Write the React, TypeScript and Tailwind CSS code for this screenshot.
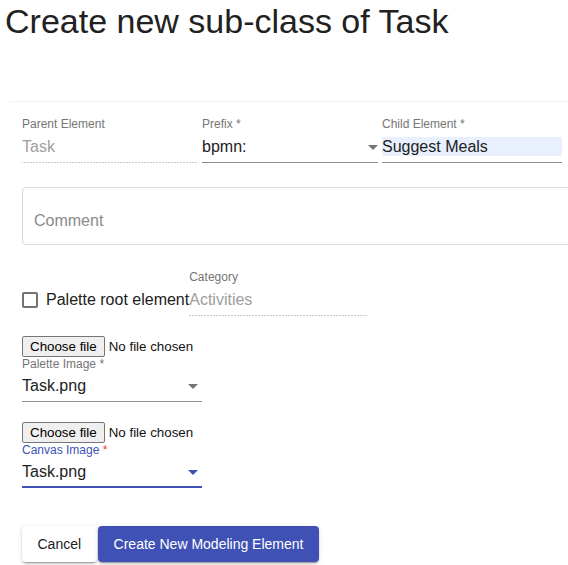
import React from "react";

const font = "font-['Liberation_Sans',Arial,sans-serif]";

function Arrow({ color = "#757575" }: { color?: string }) {
  return (
    <svg width="10" height="5" viewBox="0 0 10 5" className="block">
      <path d="M0 0l5 5 5-5z" fill={color} />
    </svg>
  );
}

function Field({
  label,
  value,
  width,
  disabled,
  select,
  highlight,
  arrowRight = 4,
  low,
}: {
  label: string;
  value: string;
  width: number;
  disabled?: boolean;
  select?: boolean;
  highlight?: boolean;
  arrowRight?: number;
  low?: boolean;
}) {
  return (
    <div className="flex flex-col shrink-0" style={{ width }}>
      <div
        className={
          "h-[16px] text-[12px] leading-[12px] text-[#757575] whitespace-nowrap " + (low ? "pt-[4px]" : "pt-[3px]")
        }
      >
        {label}
      </div>
      <div
        className={
          "relative flex h-[32px] pt-[6px] pb-[7px] text-[16px] leading-[19px] " +
          (disabled
            ? "text-[#9e9e9e] bg-[linear-gradient(to_right,rgba(0,0,0,0.42)_33%,transparent_0%)] bg-[length:3px_1px] bg-repeat-x bg-bottom"
            : "text-[#212121] border-b border-[#8f8f8f]")
        }
      >
        <span className={"h-[19px] block w-full " + (highlight ? "bg-[#e8f0fe]" : "")}>{value}</span>
        {select && (
          <span className="absolute top-[14px]" style={{ right: arrowRight }}>
            <Arrow />
          </span>
        )}
      </div>
    </div>
  );
}

function FileRow() {
  return (
    <div className="flex h-[18px] items-start text-[13.33px] leading-[15px] text-[#111]">
      <div className="h-[21px] px-[7px] flex items-center border border-[#767676] rounded-[2px] bg-[#efefef] text-black">
        Choose file
      </div>
      <div className="ml-[4px] h-[21px] flex items-center">No file chosen</div>
    </div>
  );
}

export default function App() {
  return (
    <div className={"w-[568px] h-[565px] overflow-hidden bg-white " + font}>
      <h1 className="pl-[5px] text-[34px] leading-[42px] text-[#212121] font-normal whitespace-nowrap">
        Create new sub-class of Task
      </h1>
      <div className="mt-[59px] ml-[7px] w-[600px] rounded-tl-[4px] border-t border-[#f2f2f2] pl-[15px] pt-[13px]">
        <div className="flex gap-[4px]">
          <Field label="Parent Element" value="Task" width={176} disabled />
          <Field label="Prefix *" value="bpmn:" width={176} select arrowRight={0} />
          <Field label="Child Element *" value="Suggest Meals" width={180} highlight />
        </div>

        <div className="mt-[24px] w-[560px] h-[58px] border border-[#dadada] rounded-[4px] pl-[11px] pt-[23px] text-[16px] leading-[19px] text-[#8a8a8a]">
          Comment
        </div>

        <div className="mt-[23px] flex items-start">
          <label className="mt-[20px] h-[24px] flex items-center text-[16px] text-[#212121] whitespace-nowrap">
            <span className="w-[16px] h-[16px] border-2 border-[#737373] rounded-[2px] mr-[8px]" />
            Palette root element
          </label>
          <Field label="Category" value="Activities" width={178} disabled />
        </div>

        <div className="mt-[20px]">
          <FileRow />
          <Field label="Palette Image *" value="Task.png" width={180} select low />
        </div>

        <div className="mt-[20px]">
          <FileRow />
          <div className="flex flex-col w-[180px]">
            <div className="h-[16px] pt-[4px] text-[12px] leading-[12px] text-[#3f51b5]">
              Canvas Image <span className="text-[#f44336]">*</span>
            </div>
            <div className="relative h-[32px] pt-[6px] pb-[6px] text-[16px] leading-[19px] text-[#212121] border-b-2 border-[#3f51b5]">
              Task.png
              <span className="absolute top-[14px] right-[4px]">
                <Arrow color="#3f51b5" />
              </span>
            </div>
          </div>
        </div>

        <div className="mt-[38px] flex">
          <button className="h-[36px] px-[15.5px] rounded-[4px] bg-white text-[14px] text-[#212121] shadow-[0_3px_1px_-2px_rgba(0,0,0,0.2),0_2px_2px_0_rgba(0,0,0,0.14),0_1px_5px_0_rgba(0,0,0,0.12)]">
            Cancel
          </button>
          <button className="ml-[1px] h-[36px] px-[16px] rounded-[4px] bg-[#3f51b5] text-[14px] text-white shadow-[0_3px_1px_-2px_rgba(0,0,0,0.2),0_2px_2px_0_rgba(0,0,0,0.14),0_1px_5px_0_rgba(0,0,0,0.12)]">
            Create New Modeling Element
          </button>
        </div>
      </div>
    </div>
  );
}
